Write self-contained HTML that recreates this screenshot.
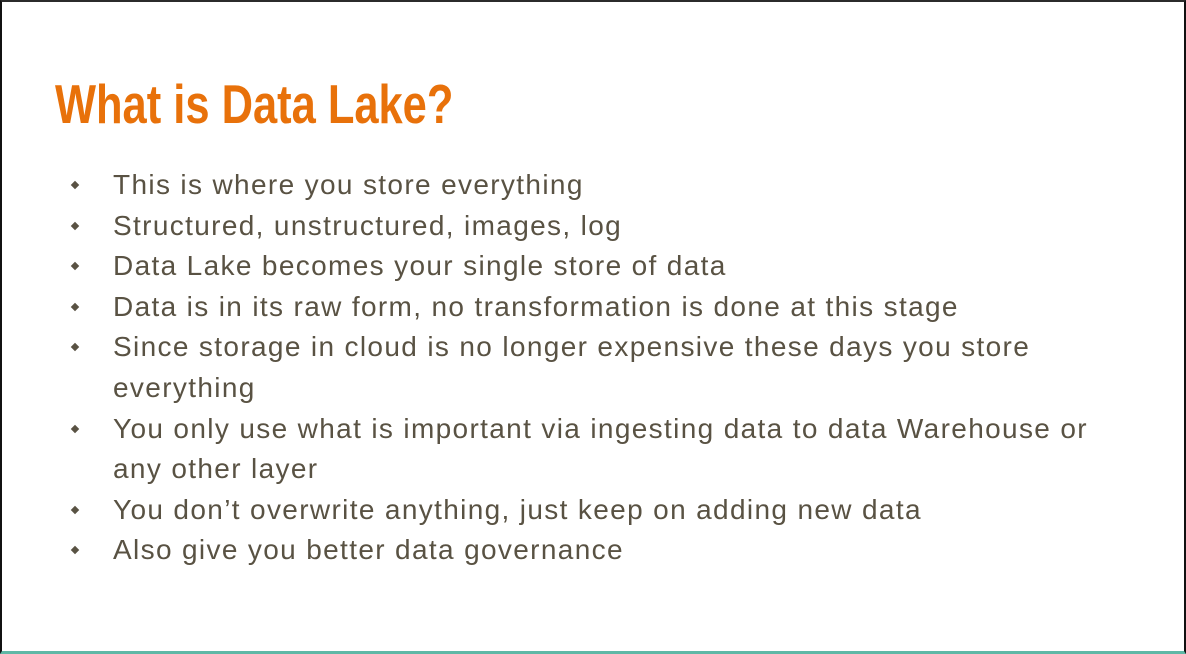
<!DOCTYPE html>
<html><head><meta charset="utf-8"><style>
html,body{margin:0;padding:0}
body{width:1186px;height:654px;position:relative;overflow:hidden;background:#fff;font-family:"Liberation Sans",sans-serif}
.frame{position:absolute;left:0;top:0;width:1186px;height:654px;box-sizing:border-box;border-top:2px solid #2b2b2b;border-left:2px solid #111;border-right:2px solid #111;border-bottom:3px solid #5fb8a6}
h1{position:absolute;left:55px;top:74px;margin:0;font-family:"Liberation Sans",sans-serif;font-weight:bold;font-size:55px;color:#e8710a;line-height:60px;white-space:nowrap;transform:scaleX(0.79);transform-origin:left}
ul{position:absolute;left:0;top:165px;margin:0;padding:0;list-style:none}
li{position:relative;padding-left:113px;font-size:28px;line-height:40.6px;color:#595243;width:1060px;letter-spacing:1.35px}
li:before{content:"";position:absolute;left:72px;top:17px;width:6px;height:6px;background:#595243;transform:rotate(45deg)}
</style></head><body>
<div class="frame"></div>
<h1>What is Data Lake?</h1>
<ul>
<li>This is where you store everything</li>
<li>Structured, unstructured, images, log</li>
<li>Data Lake becomes your single store of data</li>
<li>Data is in its raw form, no transformation is done at this stage</li>
<li>Since storage in cloud is no longer expensive these days you store<br>everything</li>
<li>You only use what is important via ingesting data to data Warehouse or<br>any other layer</li>
<li>You don’t overwrite anything, just keep on adding new data</li>
<li>Also give you better data governance</li>
</ul>
</body></html>
